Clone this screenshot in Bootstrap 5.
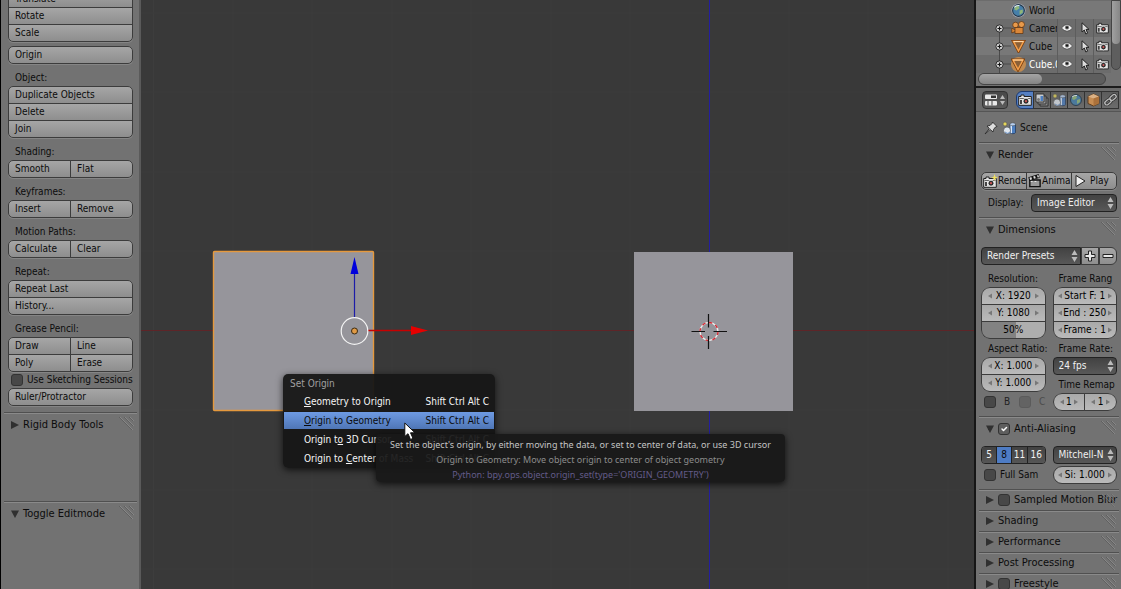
<!DOCTYPE html>
<html lang="en">
<head>
<meta charset="utf-8">
<meta name="viewport" content="width=device-width, initial-scale=1">
<title>Blender</title>
<link rel="stylesheet" href="https://cdn.jsdelivr.net/npm/bootstrap@5.3.0/dist/css/bootstrap.min.css">
<style>
:root{--panel:#727272;--edge:#3c3c3c;--dark:#484848}
body{font:10px/16px "DejaVu Sans Condensed","DejaVu Sans",sans-serif;color:#0c0c0c;background:#393939}
.app{height:100vh}
.tools{width:141px;background:var(--panel);border-left:1px solid #000;border-right:2px solid #5a5a5a}
.props{width:147px;background:var(--panel);border-left:2px solid #161616}
.tools-body{margin-top:-10px;padding:0 6px 6px 7px}
.cap{height:22px;padding:6px 0 0 7px;white-space:nowrap}
.cap-s{height:18px;padding:2px 0 0 7px}
.cap-r{padding-left:6px}
/* stacked and joined buttons */
.bl{--bs-btn-font-size:10px;--bs-btn-line-height:16px;--bs-btn-padding-y:0;--bs-btn-padding-x:6px;--bs-btn-border-radius:0;height:18px;min-width:0;text-align:left;color:#0c0c0c;border:1px solid var(--edge);background:linear-gradient(#a6a6a6,#8e8e8e);overflow:hidden;white-space:nowrap}
.bl:hover{color:#000;background:#aaa;border-color:var(--edge)}
.stack{display:flex;flex-direction:column}
.stack>*+*{margin-top:-1px}
.duo{display:flex}
.duo>*{flex:1 1 0}
.duo>*+*{margin-left:-1px}
.round{border-radius:5px;overflow:hidden;box-shadow:0 1px 0 #858585}
.round>.bl:first-child,.round>.duo:first-child>.bl:first-child{border-top-left-radius:5px}
.stack.round>.bl:first-child,.duo.round>.bl:last-child,.stack.round>.duo:first-child>.bl:last-child{border-top-right-radius:5px}
.stack.round>.bl:last-child,.duo.round>.bl:last-child,.stack.round>.duo:last-child>.bl:last-child{border-bottom-right-radius:5px}
.stack.round>.bl:last-child,.duo.round>.bl:first-child,.stack.round>.duo:last-child>.bl:first-child{border-bottom-left-radius:5px}
/* panels */
.panel{border-top:1px solid #505050;box-shadow:inset 0 1px 0 #8a8a8a;margin:0 2px 0 3px}
.phead{height:23px;padding:0 2px 0 7px;font-size:11px;white-space:nowrap;overflow:hidden}
.shut .phead{height:20px}
.tw{border:0;background:none;padding:0;width:12px;height:12px;display:flex;align-items:center}
.grip{width:16px;height:15px;flex:none;align-self:start;margin-top:3px;margin-left:auto;opacity:.8}
.over .grip{margin-left:-16px;opacity:.4}
.over{padding-right:0}
.tick.form-check-input{width:12px;height:12px;margin:0;flex:none;border:1px solid #333;border-radius:3px;background-color:var(--dark);box-shadow:none}
.tick.form-check-input:checked{background-color:#5e5e5e;border-color:#333}
.tick.form-check-input:disabled{opacity:.35}
/* number fields */
.num{height:18px;border:1px solid var(--edge);background:linear-gradient(#a9a9a9,#bababa);padding:0 4px;min-width:0}
.num input{flex:1;width:0;min-width:0;height:16px;border:0;padding:0;background:none;text-align:center;color:#000}
.num svg{width:4px;height:6px;flex:none;fill:#777}
.wide .num svg{margin:0 2px}
.pill{border-radius:9px;overflow:hidden}
.stack.pill>.num:first-child{border-radius:9px 9px 0 0}
.stack.pill>.num:last-child{border-radius:0 0 9px 9px}
.duo.pill>.num:first-child{border-radius:9px 0 0 9px}
.duo.pill>.num:last-child{border-radius:0 9px 9px 0}
.num.pct{background:linear-gradient(90deg,#828282 54%,#aeaeae 54%)}
/* menus */
.drop.form-select{height:18px;min-width:0;font-size:10px;line-height:16px;padding:0 9px 0 5px;color:#f0f0f0;border:1px solid #222;border-radius:4px;background:url("data:image/svg+xml,%3Csvg xmlns='http://www.w3.org/2000/svg' viewBox='0 0 7 12'%3E%3Cpath d='M0.5 5 3.5 0 6.5 5zM0.5 7 3.5 12 6.5 7z' fill='%23bbb'/%3E%3C/svg%3E") right 2px center/7px 12px no-repeat,linear-gradient(#424242,#585858)}
.grid2{display:grid;grid-template-columns:minmax(0,1fr) minmax(0,1fr);column-gap:7px}
.pbody{padding:6px 2px 5px}
.seg{height:18px;border:1px solid #222;border-radius:4px;overflow:hidden}
.seg button{border:0;border-right:1px solid #222;padding:0;color:#f0f0f0;background:linear-gradient(#424242,#565656)}
.seg button:last-child{border-right:0}
.seg .on{background:#4e7cc4;color:#0c0c0c}
/* outliner */
.outl{height:88px;border-bottom:2px solid #1c1c1c;overflow:hidden}
.rows{height:73px;display:flex;flex-direction:column;justify-content:flex-end;background:#6c6c6c}
.orow{height:18px;flex:none;padding-left:16px}
.orow:nth-child(odd){background:#787878}
.oname{width:28px;overflow:hidden;white-space:nowrap;margin-left:3px;height:18px;line-height:20px}
.orow .cell{width:18px;height:18px;border-left:1px solid #5d5d5d;display:flex;align-items:center;justify-content:center}
.vtrack{width:10px;margin-right:2px;background:#5e5e5e;border:1px solid #444;border-radius:0 0 5px 5px;height:70px}
.vthumb{height:43px;background:linear-gradient(90deg,#a0a0a0,#868686);border-radius:0 0 5px 5px}
.htrack{height:12px;margin:0 15px 0 2px;background:#5e5e5e;border:1px solid #444;border-radius:6px}
.hthumb{width:50%;height:10px;background:linear-gradient(#a4a4a4,#848484);border-radius:5px}
.tabsbar{height:24px;padding-left:6px;background:#6b6b6b;border-bottom:1px solid #555;overflow:hidden}
.tabsbar button{height:18px;padding:0;border:1px solid #333;background:linear-gradient(#484848,#5a5a5a);display:flex;align-items:center;justify-content:center}
.tabsbar .tb{width:18px;margin-right:-1px;flex:none;background:linear-gradient(#5c5c5c,#6c6c6c)}
.tabsbar .tb.on{background:#5680c2;border-color:#1d3a70}
.crumb{height:30px;padding-top:2px}
/* 3D view overlays */
.view{min-width:0}
.view>svg.scene{width:100%;height:100%;display:block}
.ctx{left:142px;top:374px;width:212px;padding:1px 1px 0;border-radius:5px;background:rgba(22,22,22,.95);box-shadow:0 2px 7px rgba(0,0,0,.7);color:#fff;height:94px;border:0;font-size:10px}
.ctx h2{font-size:10px;line-height:18px;margin:0;padding-left:6px;color:#a0a0a0;font-weight:400}
.ctx button{height:17px;margin-bottom:2px;width:100%;border:0;background:none;color:#f5f5f5;padding:0 5px 0 20px;line-height:17px}
.ctx .on{background:linear-gradient(#6e9ae2,#4f76b6);color:#0a0a0a}
.tipbox{left:235px;top:434px;width:409px;height:48px;padding-top:3px;border-radius:4px;background:rgba(24,24,24,.94);box-shadow:0 2px 7px rgba(0,0,0,.75);text-align:center;font:9px/15px "Noto Sans","DejaVu Sans",sans-serif;color:#c4c4c4;white-space:nowrap}
.tipbox .t2{color:#8c8c8c}
.tipbox .t3{color:#625a88}
.ptr{left:263px;top:422px;width:12px;height:19px}
</style>
</head>
<body>
<svg width="0" height="0" class="position-absolute" aria-hidden="true">
<defs>
<symbol id="grip" viewBox="0 0 16 15"><path d="M1 1 14 14M6 1 15 10M11 1 15 5" stroke="#8d8d8d" fill="none"/><path d="M0 1 13 14M5 1 14 10M10 1 14 5" stroke="#5c5c5c" fill="none"/></symbol>
<symbol id="open" viewBox="0 0 8 8"><path d="M0 .5H8L4 8z" fill="#303030"/></symbol>
<symbol id="closed" viewBox="0 0 8 8"><path d="M0 0V8L8 4z" fill="#303030"/></symbol>
<symbol id="al" viewBox="0 0 5 6"><path d="M5 0V6L0 3z"/></symbol>
<symbol id="ar" viewBox="0 0 5 6"><path d="M0 0V6L5 3z"/></symbol>
<symbol id="eye" viewBox="0 0 12 10"><path d="M.5 5Q6-2 11.500 5 6 11.500.500 5z" fill="#eee" stroke="#444" stroke-width=".7"/><circle cx="6" cy="4.600" r="2" fill="#666"/><circle cx="6" cy="4.400" r="1" fill="#111"/></symbol>
<symbol id="arrow" viewBox="0 0 10 13"><path d="M2 .8V10L4.300 8 5.800 12 7.600 11.200 6 7.400H9z" fill="#ddd" stroke="#222"/></symbol>
<symbol id="cam" viewBox="0 0 14 12"><path d="M.7 2.500H3V1H6V2.500H13.300V11.300H.7z" fill="#e4e4e4" stroke="#222"/><path d="M1.500 4.500H12.500" stroke="#666"/><circle cx="8" cy="7.200" r="3" fill="#2c2c2c" stroke="#fff" stroke-width=".8"/><circle cx="8" cy="7.200" r="1.100" fill="#c55"/><rect x="2" y="6" width="2" height="4" fill="#444"/></symbol>
<symbol id="globe" viewBox="0 0 14 14"><circle cx="7" cy="7" r="5.500" fill="#467faa" stroke="#243747"/><path d="M4 3 7 2.500 8 5 5 7 3 6zM8 7 11 6 11 9 8 11z" fill="#8fb57a"/><path d="M3 4Q5 2 8 2.500" stroke="#e6f0fa" fill="none"/></symbol>
<symbol id="plus" viewBox="0 0 8 8"><circle cx="4" cy="4" r="3.200" fill="#d4d4d4" stroke="#222" stroke-width=".8"/><path d="M2.200 4H5.800M4 2.200V5.800" stroke="#111"/></symbol>
<symbol id="tri" viewBox="0 0 14 14"><path d="M2 2.500H12L7 12z" fill="none" stroke="#7a3d0c" stroke-width="3"/><path d="M2 2.500H12L7 12z" fill="#8a6038" stroke="#f5a04b" stroke-width="1.500"/><path d="M2 2.500H12" stroke="#ffd9a8"/></symbol>
<symbol id="scn" viewBox="0 0 14 14"><path d="M8 3.500V11.500A2.800 1.500 0 0 0 13.500 11.500V3.500z" fill="#4d7fc0" stroke="#1e3354" stroke-width=".7"/><path d="M8.500 4V11.500L10 12.500V4z" fill="#dce8f8"/><ellipse cx="10.700" cy="3.300" rx="2.800" ry="1.500" fill="#b8d0f0" stroke="#444" stroke-width=".5"/><circle cx="3" cy="3" r="2" fill="#e5d65a" stroke="#555" stroke-width=".6"/><circle cx="5" cy="9.500" r="3.500" fill="#dfe6ee" stroke="#444" stroke-width=".6"/><path d="M3 11Q5 13.500 8 11.500" stroke="#6d94c8" fill="none"/></symbol>
</defs>
</svg>

<div class="app d-flex overflow-hidden">

<aside class="tools flex-shrink-0 overflow-hidden">
  <div class="tools-body">
    <div class="stack round"><button class="btn bl">Translate</button><button class="btn bl">Rotate</button><button class="btn bl">Scale</button></div>
    <div class="stack round mt-1"><button class="btn bl">Origin</button></div>
    <div class="cap">Object:</div>
    <div class="stack round"><button class="btn bl">Duplicate Objects</button><button class="btn bl">Delete</button><button class="btn bl">Join</button></div>
    <div class="cap">Shading:</div>
    <div class="duo round"><button class="btn bl">Smooth</button><button class="btn bl">Flat</button></div>
    <div class="cap">Keyframes:</div>
    <div class="duo round"><button class="btn bl">Insert</button><button class="btn bl">Remove</button></div>
    <div class="cap">Motion Paths:</div>
    <div class="duo round"><button class="btn bl">Calculate</button><button class="btn bl">Clear</button></div>
    <div class="cap">Repeat:</div>
    <div class="stack round"><button class="btn bl">Repeat Last</button><button class="btn bl">History...</button></div>
    <div class="cap">Grease Pencil:</div>
    <div class="stack round"><div class="duo"><button class="btn bl">Draw</button><button class="btn bl">Line</button></div><div class="duo"><button class="btn bl">Poly</button><button class="btn bl">Erase</button></div></div>
    <div class="d-flex align-items-center text-nowrap" style="padding-left:3px"><input class="form-check-input tick" type="checkbox" id="sk"><label for="sk" class="ps-1">Use Sketching Sessions</label></div>
    <div class="stack round"><button class="btn bl">Ruler/Protractor</button></div>
  </div>
  <section class="panel"><div class="phead d-flex align-items-center"><button class="tw" aria-label="Expand"><svg width="8" height="8"><use href="#closed"/></svg></button><span>Rigid Body Tools</span><svg class="grip"><use href="#grip"/></svg></div></section>
  <section class="panel" style="margin-top:65px"><div class="phead d-flex align-items-center"><button class="tw" aria-label="Collapse"><svg width="8" height="8"><use href="#open"/></svg></button><span>Toggle Editmode</span><svg class="grip"><use href="#grip"/></svg></div></section>
</aside>

<main class="view flex-grow-1 position-relative overflow-hidden">
  <svg class="scene" viewBox="0 0 833 589" preserveAspectRatio="xMinYMin slice" aria-label="3D view">
    <rect width="833" height="589" fill="#393939"/>
    <path d="M12.500 0V589M92 0V589M171 0V589M251 0V589M330 0V589M410 0V589M489 0V589M648 0V589M727 0V589M807 0V589M0 13H833M0 92H833M0 172H833M0 251H833M0 410H833M0 490H833M0 569H833" stroke="#3d3d3d" fill="none"/>
    <rect x="0" y="330" width="833" height="1" fill="#5e2528"/>
    <rect x="568" y="0" width="1" height="589" fill="#231ea0"/>
    <rect x="493" y="252" width="159" height="159" fill="#96959b"/>
    <rect x="72.500" y="251.500" width="160" height="159" rx="1" fill="#96959b" stroke="#e5993d" stroke-width="1.400"/>
    <path d="M213.500 318V272" stroke="#1c1ca8" stroke-width="1.200"/><path d="M209.500 274 213.500 257 217.500 274z" fill="#0000dc"/>
    <path d="M227 330.500H272" stroke="#c80000" stroke-width="1.300"/><path d="M270 326 287 330.500 270 335z" fill="#e60000"/>
    <circle cx="213.500" cy="331" r="13.300" fill="none" stroke="#f4f4f4" stroke-width="1.200"/>
    <circle cx="213.500" cy="331" r="3" fill="#e09a45" stroke="#3a2a12"/>
    <circle cx="568" cy="331.500" r="9" fill="none" stroke="#eee" stroke-width="1.400"/>
    <circle cx="568" cy="331.500" r="9" fill="none" stroke="#d62a35" stroke-width="1.400" stroke-dasharray="3.500 3.500"/>
    <path d="M550.500 331.500H564M572.500 331.500H586M567.500 314V327.500M567.500 336V349" stroke="#111" stroke-width="1.200"/>
  </svg>

  <div class="ctx position-absolute" role="menu">
    <h2>Set Origin</h2>
    <button class="d-flex justify-content-between"><span><u>G</u>eometry to Origin</span><span>Shift Ctrl Alt C</span></button>
    <button class="d-flex justify-content-between on"><span><u>O</u>rigin to Geometry</span><span>Shift Ctrl Alt C</span></button>
    <button class="d-flex justify-content-between"><span>Origin t<u>o</u> 3D Cursor</span><span>Shift Ctrl Alt C</span></button>
    <button class="d-flex justify-content-between"><span>Origin to <u>C</u>enter of Mass</span><span>Shift Ctrl Alt C</span></button>
  </div>
  <div class="tipbox position-absolute" role="tooltip">
    <div>Set the object's origin, by either moving the data, or set to center of data, or use 3D cursor</div>
    <div class="t2">Origin to Geometry: Move object origin to center of object geometry</div>
    <div class="t3">Python: bpy.ops.object.origin_set(type='ORIGIN_GEOMETRY')</div>
  </div>
  <svg class="ptr position-absolute" viewBox="0 0 12 19"><path d="M.8 1V14.500L4 11.700 6.500 17.500 9 16.400 6.500 10.800H11z" fill="#fff" stroke="#111"/></svg>
</main>

<aside class="props flex-shrink-0 overflow-hidden">
  <div class="outl">
    <div class="d-flex">
      <div class="rows flex-grow-1">
        <div class="orow d-flex align-items-center"><span style="width:19px"></span><svg width="15" height="15"><circle cx="7.500" cy="7.500" r="7" fill="#b0b4c4"/><use href="#globe"/></svg><span class="oname">World</span></div>
        <div class="orow d-flex align-items-center"><svg width="19" height="18"><path d="M8 9H19M7.500 9V18" stroke="#4a4a4a"/><use href="#plus" x="3" y="5" width="9" height="9"/></svg><svg width="15" height="14" viewBox="0 0 15 14"><circle cx="4.500" cy="4" r="2.800" fill="#e89a4b" stroke="#5c310d" stroke-width=".7"/><circle cx="10.500" cy="3.500" r="3" fill="#e89a4b" stroke="#5c310d" stroke-width=".7"/><path d="M4 6.500H12V12.500H4zM4 9 .8 7V12L4 10.500" fill="#d9873a" stroke="#5c310d" stroke-width=".7"/></svg><span class="oname">Camer</span><span class="cell"><svg width="12" height="10"><use href="#eye"/></svg></span><span class="cell"><svg width="10" height="13"><use href="#arrow"/></svg></span><span class="cell"><svg width="13" height="12"><use href="#cam"/></svg></span></div>
        <div class="orow d-flex align-items-center"><svg width="19" height="18"><path d="M8 9H19M7.500 0V18" stroke="#4a4a4a"/><use href="#plus" x="3" y="5" width="9" height="9"/></svg><svg width="15" height="14"><use href="#tri"/></svg><span class="oname">Cube</span><span class="cell"><svg width="12" height="10"><use href="#eye"/></svg></span><span class="cell"><svg width="10" height="13"><use href="#arrow"/></svg></span><span class="cell"><svg width="13" height="12"><use href="#cam"/></svg></span></div>
        <div class="orow d-flex align-items-center"><svg width="19" height="18"><path d="M8 9H19M7.500 0V18" stroke="#4a4a4a"/><use href="#plus" x="3" y="5" width="9" height="9"/></svg><svg width="15" height="15"><circle cx="7.500" cy="7.500" r="7.500" fill="#c08a50"/><use href="#tri" width="14" height="15"/></svg><span class="oname text-white">Cube.0</span><span class="cell"><svg width="12" height="10"><use href="#eye"/></svg></span><span class="cell"><svg width="10" height="13"><use href="#arrow"/></svg></span><span class="cell"><svg width="13" height="12"><use href="#cam"/></svg></span></div>
      </div>
      <div class="vtrack flex-shrink-0"><div class="vthumb"></div></div>
    </div>
    <div class="htrack"><div class="hthumb"></div></div>
  </div>
  <div class="tabsbar d-flex align-items-center">
    <button class="rounded-1 flex-shrink-0 me-2" style="width:26px" aria-label="Editor type"><svg width="22" height="14" viewBox="0 0 22 14"><rect x="1" y="1.500" width="12" height="4.500" rx="1" fill="#e8e8e8"/><rect x="7" y="2.500" width="5" height="2.500" fill="#333"/><rect x="1" y="8" width="12" height="4.500" rx="1" fill="#e8e8e8"/><path d="M4 8V12.500M8 8V12.500" stroke="#444"/><path d="M16 6 18.500 2 21 6zM16 8 18.500 12 21 8z" fill="#bbb"/></svg></button>
    <button class="tb on rounded-start" aria-label="Render"><svg width="14" height="12"><use href="#cam"/></svg></button>
    <button class="tb" aria-label="Render layers"><svg width="14" height="14" viewBox="0 0 14 14"><path d="M5 5H13V13H5z" fill="#888" stroke="#333"/><path d="M3 3H11V11H3z" fill="#999" stroke="#333"/><path d="M1 1H9V9H1z" fill="#c8ccd0" stroke="#333"/><circle cx="3.500" cy="6.500" r="1.500" fill="#777"/><rect x="5.500" y="3" width="2.500" height="5" fill="#4d7fc0"/></svg></button>
    <button class="tb" aria-label="Scene"><svg width="14" height="14" opacity=".75"><use href="#scn"/></svg></button>
    <button class="tb" aria-label="World"><svg width="14" height="14" opacity=".8"><use href="#globe"/></svg></button>
    <button class="tb" aria-label="Object"><svg width="13" height="14" viewBox="0 0 13 14" opacity=".85"><path d="M1 3.500 6.500 1 12 3.500V10.500L6.500 13 1 10.500z" fill="#d89450" stroke="#5c3512"/><path d="M1 3.500 6.500 5.500 12 3.500 6.500 1z" fill="#f1c08c"/><path d="M6.500 5.500V13L12 10.500V3.500z" fill="#b87434"/></svg></button>
    <button class="tb" aria-label="Constraints"><svg width="15" height="14" viewBox="0 0 15 14"><g fill="none" stroke="#333" stroke-width="2.800"><rect x="1.500" y="7" width="7" height="4" rx="2" transform="rotate(-40 5 9)"/><rect x="6.500" y="2.500" width="7" height="4" rx="2" transform="rotate(-40 10 4.500)"/></g><g fill="none" stroke="#bbb" stroke-width="1.300"><rect x="1.500" y="7" width="7" height="4" rx="2" transform="rotate(-40 5 9)"/><rect x="6.500" y="2.500" width="7" height="4" rx="2" transform="rotate(-40 10 4.500)"/></g></svg></button>
  </div>
  <div class="crumb d-flex align-items-center ps-2"><svg width="14" height="14" viewBox="0 0 14 14"><path d="M8.500 1 13 5.500 11.500 6 9.500 8.500 9 11 6.200 8.400 1 13 5.300 7.500 3 5 6 4.500 8 2.500z" fill="#ddd" stroke="#2b2b2b" stroke-width=".9"/></svg><svg width="14" height="14" class="ms-1 me-1"><use href="#scn"/></svg><span>Scene</span></div>

  <section class="panel">
    <div class="phead d-flex align-items-center"><button class="tw" aria-label="Collapse"><svg width="8" height="8"><use href="#open"/></svg></button><span>Render</span><svg class="grip"><use href="#grip"/></svg></div>
    <div class="pbody">
      <div class="duo round mb-1">
        <button class="btn bl d-flex align-items-center px-0"><svg width="16" height="14" class="flex-shrink-0" viewBox="0 0 16 14"><use href="#cam" x="1" y="2" width="14" height="12"/><path d="M12.500 0 13.500 3 16 3.500 13.500 4.500 12.500 7 11.500 4.500 9 3.500 11.500 3z" fill="#f0e060"/></svg>Rende</button>
        <button class="btn bl d-flex align-items-center px-0"><svg width="15" height="14" class="flex-shrink-0" viewBox="0 0 16 14"><path d="M3 6H14V13H3z" fill="#999" stroke="#111" stroke-width="1.500"/><path d="M2 5 13 1.500" stroke="#111" stroke-width="4"/><path d="M3 4.700 5 4M7 3.500 9 2.800M11 2.200 12.500 1.700" stroke="#ddd" stroke-width="2.500"/><path d="M4 7.500H6M8 7.500H10" stroke="#eee"/></svg>Anima</button>
        <button class="btn bl d-flex align-items-center px-0"><svg width="18" height="14" class="flex-shrink-0" viewBox="0 0 18 14"><path d="M4 1.500V12.500L13 7z" fill="#eee" stroke="#222"/></svg>Play</button>
      </div>
      <div class="d-flex align-items-center"><label for="disp" class="text-nowrap" style="width:50px;padding-left:7px">Display:</label><select class="form-select drop flex-grow-1" style="width:0" id="disp"><option>Image Editor</option></select></div>
    </div>
  </section>

  <section class="panel">
    <div class="phead d-flex align-items-center"><button class="tw" aria-label="Collapse"><svg width="8" height="8"><use href="#open"/></svg></button><span>Dimensions</span><svg class="grip"><use href="#grip"/></svg></div>
    <div class="pbody">
      <div class="d-flex"><select class="form-select drop rounded-end-0" aria-label="Render presets"><option>Render Presets</option></select>
        <button class="btn bl p-0 flex-shrink-0 d-flex align-items-center justify-content-center" style="width:18px" aria-label="Add preset"><svg width="12" height="12" viewBox="0 0 12 12"><path d="M4.500 1H7.500V4.500H11V7.500H7.500V11H4.500V7.500H1V4.500H4.500z" fill="#e8e8e8" stroke="#222"/></svg></button>
        <button class="btn bl p-0 flex-shrink-0 d-flex align-items-center justify-content-center rounded-end" style="width:18px" aria-label="Remove preset"><svg width="12" height="12" viewBox="0 0 12 12"><path d="M1 4.500H11V7.500H1z" fill="#e8e8e8" stroke="#222"/></svg></button></div>
      <div class="grid2">
        <div class="wide">
          <div class="cap">Resolution:</div>
          <div class="stack pill">
            <div class="num d-flex align-items-center"><svg><use href="#al"/></svg><input aria-label="X" value="X: 1920"><svg><use href="#ar"/></svg></div>
            <div class="num d-flex align-items-center"><svg><use href="#al"/></svg><input aria-label="Y" value="Y: 1080"><svg><use href="#ar"/></svg></div>
            <div class="num pct d-flex align-items-center"><input aria-label="Percentage" value="50%"></div>
          </div>
          <div class="cap cap-s">Aspect Ratio:</div>
          <div class="stack pill">
            <div class="num d-flex align-items-center"><svg><use href="#al"/></svg><input aria-label="Aspect X" value="X: 1.000"><svg><use href="#ar"/></svg></div>
            <div class="num d-flex align-items-center"><svg><use href="#al"/></svg><input aria-label="Aspect Y" value="Y: 1.000"><svg><use href="#ar"/></svg></div>
          </div>
          <div class="d-flex align-items-center" style="padding:2px 0 0 3px"><input class="form-check-input tick" type="checkbox" id="bo"><label for="bo" class="ps-2" style="width:23px;color:#222">B</label><input class="form-check-input tick" type="checkbox" id="cr" disabled><label for="cr" class="ps-2" style="color:#4c4c4c">C</label></div>
        </div>
        <div>
          <div class="cap cap-r">Frame Rang</div>
          <div class="stack pill">
            <div class="num d-flex align-items-center"><svg><use href="#al"/></svg><input aria-label="Start frame" value="Start F: 1"><svg><use href="#ar"/></svg></div>
            <div class="num d-flex align-items-center"><svg><use href="#al"/></svg><input aria-label="End frame" value="End : 250"><svg><use href="#ar"/></svg></div>
            <div class="num d-flex align-items-center"><svg><use href="#al"/></svg><input aria-label="Frame step" value="Frame : 1"><svg><use href="#ar"/></svg></div>
          </div>
          <div class="cap cap-s cap-r">Frame Rate:</div>
          <select class="form-select drop" aria-label="Frame rate"><option>24 fps</option></select>
          <div class="cap cap-s cap-r">Time Remap</div>
          <div class="duo pill wide">
            <div class="num d-flex align-items-center"><svg><use href="#al"/></svg><input aria-label="Old" value="1"><svg><use href="#ar"/></svg></div>
            <div class="num d-flex align-items-center"><svg><use href="#al"/></svg><input aria-label="New" value="1"><svg><use href="#ar"/></svg></div>
          </div>
        </div>
      </div>
    </div>
  </section>

  <section class="panel">
    <div class="phead d-flex align-items-center"><button class="tw" aria-label="Collapse"><svg width="8" height="8"><use href="#open"/></svg></button><input class="form-check-input tick me-1" type="checkbox" id="aa" checked><label for="aa">Anti-Aliasing</label><svg class="grip"><use href="#grip"/></svg></div>
    <div class="pbody">
      <div class="grid2" style="row-gap:2px">
        <div class="seg d-flex"><button style="width:15px">5</button><button class="on" style="width:15px">8</button><button style="width:16px">11</button><button class="flex-fill">16</button></div>
        <select class="form-select drop" aria-label="Filter"><option>Mitchell-N</option></select>
        <div class="d-flex align-items-center text-nowrap overflow-hidden" style="padding-left:3px"><input class="form-check-input tick" type="checkbox" id="fs"><label for="fs" class="ps-1">Full Sam</label></div>
        <div class="num pill d-flex align-items-center"><svg><use href="#al"/></svg><input aria-label="Size" value="Si: 1.000"><svg><use href="#ar"/></svg></div>
      </div>
    </div>
  </section>

  <section class="panel shut"><div class="phead over d-flex align-items-center"><button class="tw" aria-label="Expand"><svg width="8" height="8"><use href="#closed"/></svg></button><input class="form-check-input tick me-1" type="checkbox" id="mb"><label for="mb">Sampled Motion Blur</label><svg class="grip"><use href="#grip"/></svg></div></section>
  <section class="panel shut"><div class="phead d-flex align-items-center"><button class="tw" aria-label="Expand"><svg width="8" height="8"><use href="#closed"/></svg></button><span>Shading</span><svg class="grip"><use href="#grip"/></svg></div></section>
  <section class="panel shut"><div class="phead d-flex align-items-center"><button class="tw" aria-label="Expand"><svg width="8" height="8"><use href="#closed"/></svg></button><span>Performance</span><svg class="grip"><use href="#grip"/></svg></div></section>
  <section class="panel shut"><div class="phead d-flex align-items-center"><button class="tw" aria-label="Expand"><svg width="8" height="8"><use href="#closed"/></svg></button><span>Post Processing</span><svg class="grip"><use href="#grip"/></svg></div></section>
  <section class="panel shut"><div class="phead d-flex align-items-center"><button class="tw" aria-label="Expand"><svg width="8" height="8"><use href="#closed"/></svg></button><input class="form-check-input tick me-1" type="checkbox" id="fr"><label for="fr">Freestyle</label><svg class="grip"><use href="#grip"/></svg></div></section>
</aside>
</div>
<script src="https://cdn.jsdelivr.net/npm/bootstrap@5.3.0/dist/js/bootstrap.bundle.min.js"></script>
</body>
</html>
